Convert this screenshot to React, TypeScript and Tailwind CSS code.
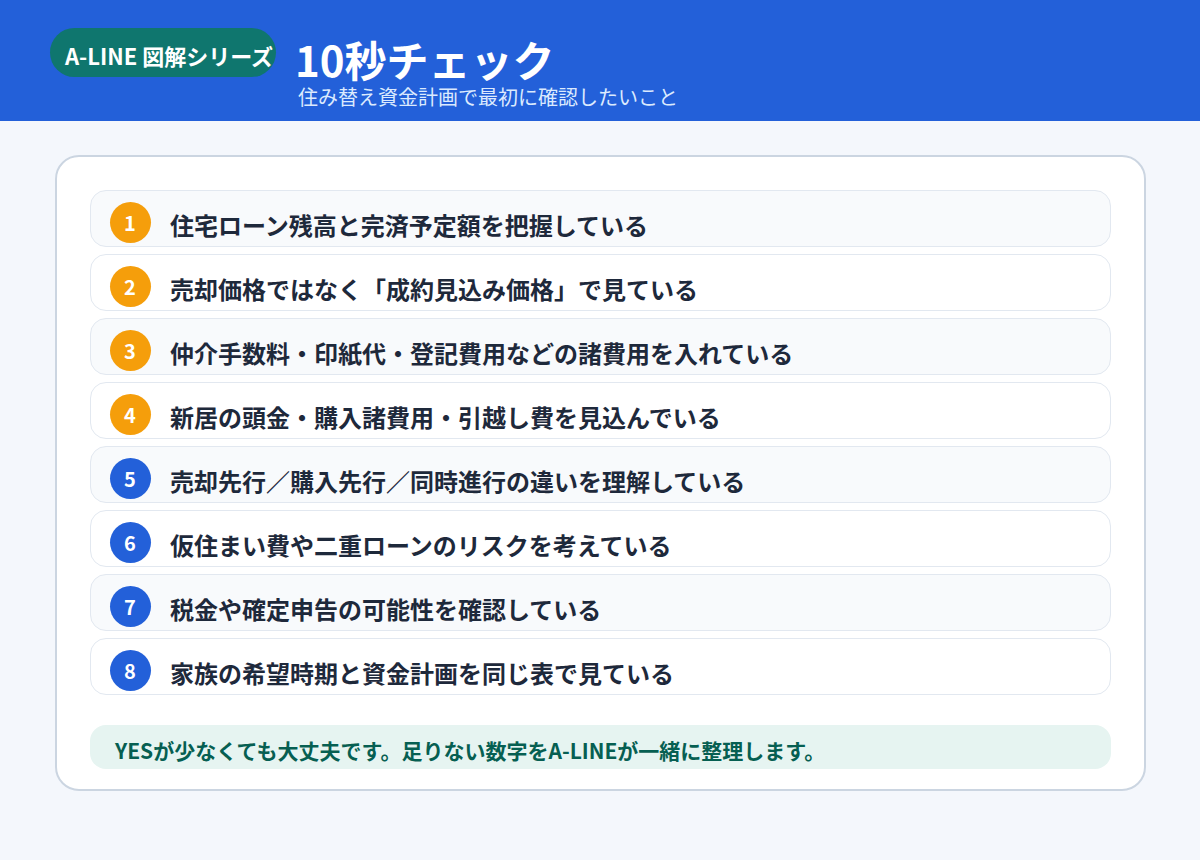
const items: { t: string; c: string }[] = [
  { t: "住宅ローン残高と完済予定額を把握している", c: "bg-[#f59e0b]" },
  { t: "売却価格ではなく「成約見込み価格」で見ている", c: "bg-[#f59e0b]" },
  { t: "仲介手数料・印紙代・登記費用などの諸費用を入れている", c: "bg-[#f59e0b]" },
  { t: "新居の頭金・購入諸費用・引越し費を見込んでいる", c: "bg-[#f59e0b]" },
  { t: "売却先行／購入先行／同時進行の違いを理解している", c: "bg-[#2360d9]" },
  { t: "仮住まい費や二重ローンのリスクを考えている", c: "bg-[#2360d9]" },
  { t: "税金や確定申告の可能性を確認している", c: "bg-[#2360d9]" },
  { t: "家族の希望時期と資金計画を同じ表で見ている", c: "bg-[#2360d9]" },
];

export default function App() {
  return (
    <div className="w-[1200px] h-[860px] bg-[#f4f7fc] overflow-hidden font-['Noto_Sans_CJK_JP',sans-serif]">
      <header className="h-[121px] bg-[#2360d9] flex items-start pl-[50px]">
        <div className="mt-[28px] w-[226px] h-[49px] rounded-full bg-[#0f766e] flex items-center pl-[15px] text-white font-bold text-[22px] leading-none whitespace-nowrap pt-[4px]">
          A-LINE 図解シリーズ
        </div>
        <div className="ml-[19px] mt-[34px] flex flex-col">
          <div className="text-white font-bold text-[42px] leading-[50px] h-[51px]">10秒チェック</div>
          <div className="ml-[3px] text-[#dbeafe] text-[20px] leading-[24px]">住み替え資金計画で最初に確認したいこと</div>
        </div>
      </header>
      <main className="mt-[34px] ml-[55px] w-[1091px] h-[636px] bg-white border-2 border-[#cbd5e1] rounded-[24px] px-[33px] pt-[33px]">
        <div className="flex flex-col gap-[7px]">
          {items.map((it, i) => (
            <div
              key={i}
              className={`h-[57px] rounded-[16px] border border-[#e2e8f0] pl-[19px] flex items-start ${i % 2 === 0 ? "bg-[#f8fafc]" : "bg-white"}`}
            >
              <div className={`mt-[11px] w-[41px] h-[41px] rounded-full ${it.c} text-white font-bold text-[20px] flex items-center justify-center leading-none shrink-0 pr-[1px]`}>
                {i + 1}
              </div>
              <div className="ml-[19px] mt-[17px] text-[#1e293b] font-bold text-[24px] leading-[34px] whitespace-nowrap">
                {it.t}
              </div>
            </div>
          ))}
        </div>
        <div className="mt-[30px] h-[44px] rounded-[16px] bg-[#e6f4f1] pl-[25px] text-[#065f52] font-bold text-[21px] leading-[50px] whitespace-nowrap">
          YESが少なくても大丈夫です。足りない数字をA-LINEが一緒に整理します。
        </div>
      </main>
    </div>
  );
}
